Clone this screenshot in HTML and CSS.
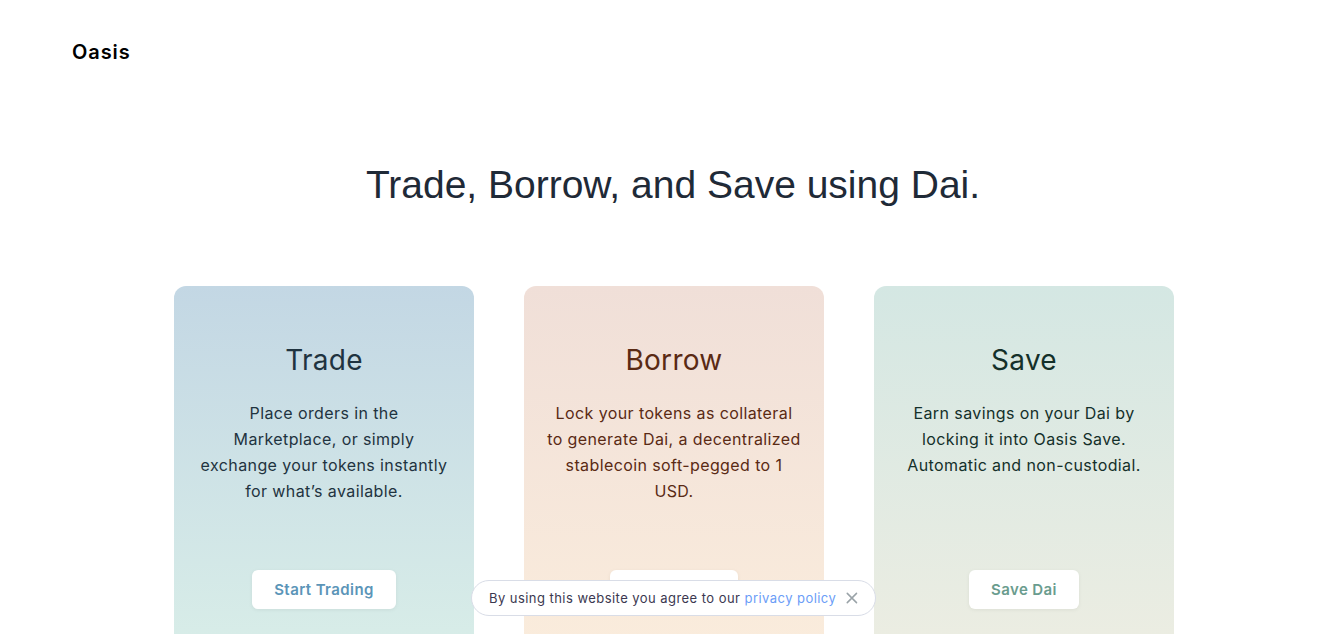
FILE: index.html
```html
<html>
	<head>
		<title>Oasis</title>
		<link rel="stylesheet" href="styles.css">
	</head>
	<body>
		<div id="header">
			<span class="logo">Oasis</span>
		</div>
		<h1 class="hero">Trade, Borrow, and Save using Dai.</h1>
		<div class="cards">
			<div class="card trade">
				<h2>Trade</h2>
				<p>Place orders in the Marketplace, or simply exchange your tokens instantly for what’s available.</p>
				<button class="btn">Start Trading</button>
			</div>
			<div class="card borrow">
				<h2>Borrow</h2>
				<p>Lock your tokens as collateral to generate Dai, a decentralized stablecoin soft-pegged to 1 USD.</p>
				<button class="btn">Borrow Dai</button>
			</div>
			<div class="card save">
				<h2>Save</h2>
				<p>Earn savings on your Dai by locking it into Oasis Save. Automatic and non-custodial.</p>
				<button class="btn">Save Dai</button>
			</div>
		</div>
		<div class="cookie">
			<span>By using this website you agree to our <a href="#">privacy policy</a></span>
			<svg class="close" width="14" height="14" viewBox="0 0 14 14">
				<path d="M1.5 1.5L12.5 12.5M12.5 1.5L1.5 12.5" stroke="#9aa3a8" stroke-width="1.8" stroke-linecap="round"/>
			</svg>
		</div>
	</body>
</html>
```

FILE: styles.css
```css
body{
	margin: 0;
	font-family: 'Inter', 'Noto Sans', sans-serif;
	letter-spacing: 0.4px;
	background-color: white;
	color: #25273d;
	overflow: hidden;
}
#header{
	height: 104px;
	padding: 40px 0 0 72px;
	box-sizing: border-box;
}
.logo{
	font-size: 20px;
	font-weight: 600;
	letter-spacing: 0.9px;
	color: #000;
	line-height: 24px;
}
.hero{
	font-family: 'Liberation Sans', Arial, sans-serif;
	font-weight: 400;
	font-size: 39px;
	letter-spacing: 0;
	color: #1f2a37;
	text-align: center;
	margin: 0;
	line-height: 48px;
	padding: 57px 0 0 4px;
}
.cards{
	display: flex;
	justify-content: center;
	gap: 50px;
	margin-top: 77px;
	padding-left: 6px;
}
.card{
	width: 300px;
	height: 380px;
	border-radius: 12px;
	box-sizing: border-box;
	padding: 56px 22px 0;
	display: flex;
	flex-direction: column;
	align-items: center;
	text-align: center;
}
.card h2{
	font-size: 28px;
	font-weight: 400;
	letter-spacing: 0.3px;
	margin: 0;
	line-height: 36px;
}
.card p{
	font-size: 16px;
	line-height: 26px;
	margin: 22px 0 0;
	height: 151px;
}
.trade{
	background: linear-gradient(#c3d7e4, #d8ede8 360px);
	color: #1f3340;
}
.borrow{
	background: linear-gradient(#f0dfd8, #faecdc 360px);
	color: #5a2a14;
}
.save{
	background: linear-gradient(#d4e7e3, #ecede2 360px);
	color: #14302a;
}
.btn{
	margin-top: 19px;
	height: 39px;
	padding: 0 22px;
	border: 0;
	border-radius: 6px;
	background: white;
	font-family: 'Inter', sans-serif;
	font-size: 15px;
	font-weight: 600;
	letter-spacing: 0.4px;
	box-shadow: 0 1px 4px rgba(0,0,0,0.06);
}
.trade .btn{
	color: #5b95b8;
}
.borrow .btn{
	color: #b0704c;
}
.save .btn{
	color: #6a9c8e;
}
.cookie{
	position: absolute;
	left: 471px;
	top: 580px;
	width: 405px;
	height: 36px;
	box-sizing: border-box;
	border: 1px solid #d9dde7;
	border-radius: 18px;
	background: white;
	display: flex;
	align-items: center;
	padding: 0 17px;
	gap: 10px;
	font-size: 13px;
	letter-spacing: 0.45px;
	white-space: nowrap;
	color: #3b3850;
}
.cookie a{
	color: #6b9df7;
	text-decoration: none;
}
```
